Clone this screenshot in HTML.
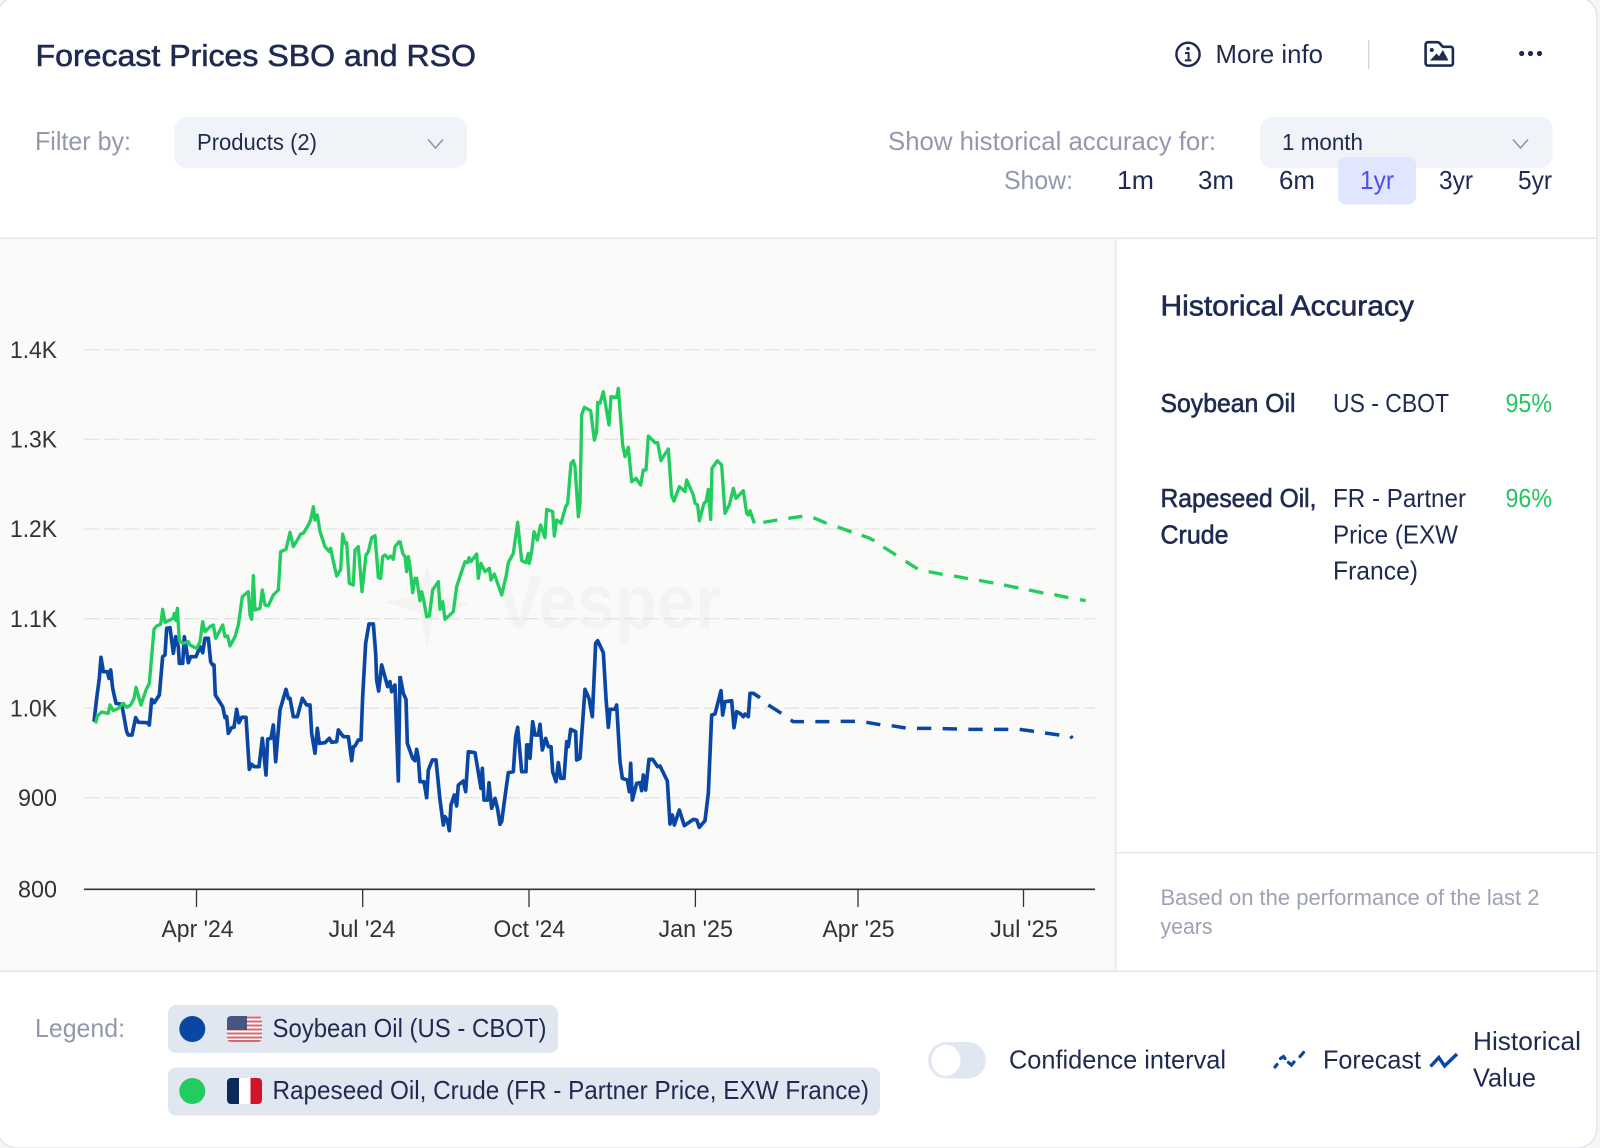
<!DOCTYPE html>
<html lang="en">
<head>
<meta charset="utf-8">
<title>Forecast Prices SBO and RSO</title>
<style>
html,body{margin:0;padding:0;width:1600px;height:1148px;background:#f6f6f6;overflow:hidden}
svg{display:block;position:absolute;left:0;top:0}
text{font-family:"Liberation Sans",sans-serif;font-size:26px;fill:#1f2a50}
.g{fill:#9398ac}
.m{stroke:#1f2a50;stroke-width:.6px}
.a{font-size:24px;fill:#333}
.n{font-size:22.5px;fill:#9da2b5}
.p{fill:#22c55e}
</style>
</head>
<body>
<svg width="1600" height="1148" viewBox="0 0 1600 1148" xmlns="http://www.w3.org/2000/svg">
<defs>
<clipPath id="f1"><rect x="227" y="1016" width="35" height="26" rx="4"/></clipPath>
<clipPath id="f2"><rect x="227" y="1078" width="35" height="26" rx="4"/></clipPath>
<clipPath id="cardclip"><rect x="-3" y="-3" width="1600" height="1151" rx="20"/></clipPath>
</defs>

<rect x="-3" y="-3" width="1600" height="1151" rx="20" fill="#fff"/>
<g clip-path="url(#cardclip)">
<rect x="0" y="239" width="1115" height="732" fill="#fafaf8"/>
<rect x="0" y="237.5" width="1597" height="1.5" fill="#e3e5ee"/>
<rect x="0" y="970.5" width="1597" height="1.5" fill="#e3e5ee"/>
<rect x="1115" y="238" width="1.3" height="733" fill="#e3e5ee"/>
<rect x="1115" y="852" width="482" height="1.3" fill="#e3e5ee"/>
</g>
<rect x="-3" y="-3" width="1600" height="1151" rx="20" fill="none" stroke="#e3e5ee" stroke-width="1.5"/>

<!-- header -->
<text class="m" x="35.500" y="66" style="font-size:31px" textLength="440.500" lengthAdjust="spacingAndGlyphs">Forecast Prices SBO and RSO</text>

<circle cx="1188" cy="54.3" r="11.6" fill="none" stroke="#1f2a50" stroke-width="2.4"/>
<circle cx="1188" cy="48.6" r="1.7" fill="#1f2a50"/>
<path d="M1185 53h3.6v7M1184.8 60.4h6.6" fill="none" stroke="#1f2a50" stroke-width="2"/>
<text x="1215.500" y="63" textLength="107.500" lengthAdjust="spacingAndGlyphs">More info</text>
<rect x="1368" y="40" width="1.5" height="29" fill="#d4d6e2"/>
<path d="M1428 42.2h9.5c1 0 1.6.4 2.3 1.2l2.2 2.6c.5.6 1 .8 1.8.8h6.7c1.4 0 2.4 1 2.4 2.4v14c0 1.5-1 2.4-2.4 2.4h-22.5c-1.4 0-2.4-1-2.4-2.4v-18.6c0-1.4 1-2.4 2.4-2.4z" fill="none" stroke="#1f2a50" stroke-width="2.6"/>
<path d="M1430 60.5l6.5-7 2.6 2.8 3.7-6.300 5.700 10.500z" fill="#1f2a50"/>
<circle cx="1431.800" cy="50" r="2" fill="#1f2a50"/>
<circle cx="1521.700" cy="53.500" r="2.600" fill="#1f2a50"/>
<circle cx="1530.500" cy="53.500" r="2.600" fill="#1f2a50"/>
<circle cx="1539.500" cy="53.500" r="2.600" fill="#1f2a50"/>

<!-- filters -->
<text class="g" x="35" y="150" textLength="96" lengthAdjust="spacingAndGlyphs">Filter by:</text>
<rect x="174.500" y="117" width="292.500" height="51" rx="12" fill="#f0f3f8"/>
<text x="197" y="150" style="font-size:23.500px" textLength="120" lengthAdjust="spacingAndGlyphs">Products (2)</text>
<path d="M428 139.500l7.500 8.500 7.500-8.500" fill="none" stroke="#8b91a6" stroke-width="1.500"/>

<text class="g" x="888" y="150" textLength="328" lengthAdjust="spacingAndGlyphs">Show historical accuracy for:</text>
<rect x="1260" y="117" width="292.500" height="51" rx="12" fill="#f0f3f8"/>
<text x="1282" y="150" style="font-size:23.500px" textLength="81" lengthAdjust="spacingAndGlyphs">1 month</text>
<path d="M1513 139.500l7.500 8.500 7.500-8.500" fill="none" stroke="#8b91a6" stroke-width="1.500"/>

<text class="g" x="1004" y="189" textLength="69" lengthAdjust="spacingAndGlyphs">Show:</text>
<rect x="1338" y="157" width="78" height="47.500" rx="8" fill="#e0e6fd"/>
<text x="1117" y="189" textLength="37" lengthAdjust="spacingAndGlyphs">1m</text>
<text x="1198" y="189" textLength="36" lengthAdjust="spacingAndGlyphs">3m</text>
<text x="1279" y="189" textLength="36" lengthAdjust="spacingAndGlyphs">6m</text>
<text x="1360" y="189" textLength="34" lengthAdjust="spacingAndGlyphs" style="fill:#4a50f0">1yr</text>
<text x="1439" y="189" textLength="34" lengthAdjust="spacingAndGlyphs">3yr</text>
<text x="1518" y="189" textLength="34" lengthAdjust="spacingAndGlyphs">5yr</text>

<!-- watermark -->
<path d="M427 563l7 32 36 9-36 9-7 34-7-34-35-11 35-7z" fill="#f3f3f1"/>
<text x="496" y="628" style="font-size:76px;font-weight:bold;fill:#f3f3f1" textLength="226" lengthAdjust="spacingAndGlyphs">Vesper</text>

<!-- grid -->
<g stroke="#e4e4e3" stroke-width="1.300" stroke-dasharray="15 5">
<path d="M84 349.700H1095M84 439.300H1095M84 529H1095M84 618.700H1095M84 708.200H1095M84 797.700H1095"/>
</g>
<path d="M84 889.300H1095" stroke="#333" stroke-width="1.600"/>
<path d="M196.500 889V907M362.700 889V907M529 889V907M695.400 889V907M858 889V907M1023.500 889V907" stroke="#333" stroke-width="1.300"/>

<g>
<text class="a" x="10" y="358" textLength="47" lengthAdjust="spacingAndGlyphs">1.4K</text>
<text class="a" x="10" y="447.500" textLength="47" lengthAdjust="spacingAndGlyphs">1.3K</text>
<text class="a" x="10" y="537" textLength="47" lengthAdjust="spacingAndGlyphs">1.2K</text>
<text class="a" x="10" y="627" textLength="47" lengthAdjust="spacingAndGlyphs">1.1K</text>
<text class="a" x="10" y="716.500" textLength="47" lengthAdjust="spacingAndGlyphs">1.0K</text>
<text class="a" x="18" y="806" textLength="39" lengthAdjust="spacingAndGlyphs">900</text>
<text class="a" x="18" y="897.500" textLength="39" lengthAdjust="spacingAndGlyphs">800</text>
</g>
<text class="a" x="161.500" y="937" textLength="72" lengthAdjust="spacingAndGlyphs">Apr '24</text>
<text class="a" x="328.500" y="937" textLength="67" lengthAdjust="spacingAndGlyphs">Jul '24</text>
<text class="a" x="493.500" y="937" textLength="71.500" lengthAdjust="spacingAndGlyphs">Oct '24</text>
<text class="a" x="658.500" y="937" textLength="74.500" lengthAdjust="spacingAndGlyphs">Jan '25</text>
<text class="a" x="822.500" y="937" textLength="72" lengthAdjust="spacingAndGlyphs">Apr '25</text>
<text class="a" x="990" y="937" textLength="68" lengthAdjust="spacingAndGlyphs">Jul '25</text>

<!-- series -->
<g fill="none" stroke-linejoin="round" stroke-linecap="butt">
<g transform="translate(60 370) scale(.33333)" stroke-width="10">
<polyline stroke="#0a47a5" stroke-width="11" points="102,1055 110,985 118,925 123,862 130,905 142,905 147,925 152,900 158,955 168,1000 185,1003 192,1040 200,1085 205,1095 216,1095 227,1043 235,1057 262,1058 268,1065 275,988 283,998 298,975 308,860 315,855 320,775 330,773 340,850 347,800 355,830 358,880 368,880 373,800 378,830 385,878 392,860 408,860 420,830 428,848 435,805 445,805 452,875 458,885 462,885 466,975 488,1010 495,1043 500,1040 505,1090 515,1073 522,1072 530,1018 537,1058 545,1042 558,1042 568,1198 575,1183 583,1190 597,1190 607,1105 618,1215 623,1107 633,1105 640,1065 647,1175 660,1020 678,958 685,985 690,985 700,1040 712,1040 727,985 740,1005 750,1005 755,1090 765,1150 772,1075 778,1120 795,1118 808,1105 815,1117 830,1115 835,1080 850,1100 865,1100 875,1172 880,1130 885,1128 895,1110 903,1110 908,980 917,820 927,762 940,762 947,850 950,930 956,963 965,885 983,950 990,935 995,965 1005,945 1015,1233 1020,918"/>
<polyline stroke="#22cc5f" points="107,1060 112,1038 125,1026 145,1030 150,1005 160,1022 175,1015 190,1000 200,1012 212,1005 222,985 228,952 243,1005 258,960 268,940 282,778 290,768 302,763 308,718 315,757 340,745 343,730 348,752 352,715 358,812 368,820 378,818 385,815 390,825 410,835 420,815 428,755 435,785 450,770 460,765 467,805 488,765 495,800 503,798 510,828 525,800 535,765 547,680 565,665 570,735 575,748 580,617 585,720 600,715 607,660 615,705 625,707 640,675 655,660 662,545 678,538 690,487 700,530 715,505 722,492 730,490 745,465 752,450 760,410 765,450 772,435 780,485 795,530 808,545 812,535 818,565 830,618 842,598 848,492 855,520 860,518 868,640 880,645 885,540 895,530 906,665 918,555 925,545 935,503 945,497 955,622 962,625 968,560 975,555 985,565 992,558 1000,568 1005,530 1020,512"/>
</g>
<g transform="translate(400 370) scale(.33333)" stroke-width="10">
<polyline stroke="#0a47a5" stroke-width="11" points="0,918 10,970 18,988 22,1120 38,1165 45,1172 50,1138 55,1165 60,1235 72,1235 80,1283 85,1200 97,1170 108,1170 120,1290 130,1365 135,1340 142,1350 148,1382 153,1305 163,1275 170,1308 175,1245 190,1233 197,1265 205,1145 225,1148 243,1255 247,1195 252,1290 263,1290 267,1238 275,1315 285,1285 293,1318 300,1363 305,1355 315,1280 325,1208 340,1205 347,1100 353,1072 365,1205 378,1205 380,1125 387,1125 390,1165 398,1055 405,1095 415,1095 420,1063 427,1140 437,1105 445,1130 453,1130 458,1205 468,1235 475,1178 482,1225 492,1225 500,1115 505,1130 512,1078 527,1085 530,1170 540,1165 555,958 567,985 577,1040 587,820 593,812 610,848 618,985 625,1072 630,1018 645,1018 650,1005 660,1175 667,1225 682,1230 688,1265 692,1180 697,1290 710,1240 720,1238 725,1262 730,1215 737,1260 747,1168 758,1168 773,1190 780,1188 802,1233 810,1362 817,1335 823,1365 838,1320 853,1367 880,1348 890,1350 898,1372 915,1352 925,1270 935,1035 945,1032 963,962 968,1035 975,995 995,992 1002,1073 1010,1025 1020,1030 1030,1040 1035,1032 1045,1040 1050,970 1060,970 1080,983"/>
<polyline stroke="#22cc5f" points="0,512 8,550 15,560 20,605 25,560 30,590 38,668 45,625 50,625 60,692 65,665 72,695 80,740 88,738 98,660 115,635 120,718 128,695 135,748 160,725 170,650 178,625 195,575 203,578 207,563 213,575 230,552 235,625 243,580 255,605 268,595 273,630 283,612 305,675 318,620 325,578 340,550 353,457 365,572 378,578 385,550 388,580 395,545 402,485 412,510 422,465 435,503 440,418 458,425 463,498 470,450 483,460 497,410 503,400 513,280 520,272 525,290 535,440 540,400 545,135 553,112 572,122 583,210 590,185 593,97 600,100 610,65 627,165 633,80 650,82 655,55 668,225 675,260 685,232 695,335 708,325 722,345 730,300 738,300 745,198 765,218 773,218 783,272 795,252 805,237 815,378 822,393 838,350 855,365 860,330 880,375 885,400 893,405 898,452 912,400 918,395 925,358 932,448 936,295 952,272 965,285 975,430 988,405 1000,355 1008,385 1030,362 1040,430 1045,435 1050,422 1063,460"/>
</g>
<g transform="translate(700 430) scale(.33333)" stroke-width="10">
<path stroke="#22cc5f" d="M190 277L232 270M265 265L307 259M340 263L380 280M413 291L455 306M485 316L510 325L523 333M550 351L588 375M617 394L653 417M686 425L728 433M762 438L804 446M837 451L880 459M912 465L955 474M987 480L1030 489M1063 494L1105 503M1140 509L1157 512"/>
<path stroke="#0a47a5" stroke-width="10.500" d="M205 825L244 850M272 870L280 875L312 875M346 875L388 875M422 874L465 874M499 877L541 884M575 887L617 894M651 895L694 895M728 896L771 897M805 898L848 898M882 898L925 898M959 898L1002 904M1035 909L1078 915M1112 918L1117 925"/>
</g>
</g>

<!-- accuracy panel -->
<text class="m" x="1160.500" y="315.500" style="font-size:29px" textLength="253.500" lengthAdjust="spacingAndGlyphs">Historical Accuracy</text>
<text class="m" x="1160.500" y="412" textLength="135" lengthAdjust="spacingAndGlyphs">Soybean Oil</text>
<text x="1333" y="412" textLength="116" lengthAdjust="spacingAndGlyphs">US - CBOT</text>
<text class="p" x="1505.500" y="412" textLength="46.500" lengthAdjust="spacingAndGlyphs">95%</text>
<text class="m" x="1160.500" y="507" textLength="156" lengthAdjust="spacingAndGlyphs">Rapeseed Oil,</text>
<text class="m" x="1160.500" y="543.500" textLength="68" lengthAdjust="spacingAndGlyphs">Crude</text>
<text x="1333" y="507" textLength="133" lengthAdjust="spacingAndGlyphs">FR - Partner</text>
<text x="1333" y="543.500" textLength="125" lengthAdjust="spacingAndGlyphs">Price (EXW</text>
<text x="1333" y="579.500" textLength="85" lengthAdjust="spacingAndGlyphs">France)</text>
<text class="p" x="1505.500" y="507" textLength="46.500" lengthAdjust="spacingAndGlyphs">96%</text>
<text class="n" x="1160.500" y="905" textLength="379" lengthAdjust="spacingAndGlyphs">Based on the performance of the last 2</text>
<text class="n" x="1160.500" y="934" textLength="52" lengthAdjust="spacingAndGlyphs">years</text>

<!-- legend -->
<text class="g" x="35" y="1037" textLength="90" lengthAdjust="spacingAndGlyphs">Legend:</text>
<rect x="168" y="1005" width="390" height="48" rx="8" fill="#e1e7f0"/>
<circle cx="192.300" cy="1029" r="13" fill="#0a47a5"/>
<g clip-path="url(#f1)">
<rect x="227" y="1016" width="35" height="26" fill="#fff"/>
<path d="M227 1017.500h35M227 1021.500h35M227 1025.500h35M227 1029.500h35M227 1033.500h35M227 1037.500h35M227 1041h35" stroke="#d06a72" stroke-width="2"/>
<rect x="227" y="1016" width="20" height="14" fill="#4a5480"/>
</g>
<text x="272.500" y="1037" textLength="274" lengthAdjust="spacingAndGlyphs">Soybean Oil (US - CBOT)</text>

<rect x="168" y="1067.500" width="712" height="48" rx="8" fill="#e1e7f0"/>
<circle cx="192.300" cy="1091" r="13" fill="#22cc5f"/>
<g clip-path="url(#f2)">
<rect x="227" y="1078" width="12" height="26" fill="#0c2a58"/>
<rect x="239" y="1078" width="12" height="26" fill="#fff"/>
<rect x="250.500" y="1078" width="12" height="26" fill="#d0142c"/>
</g>
<text x="272.500" y="1099" textLength="596.500" lengthAdjust="spacingAndGlyphs">Rapeseed Oil, Crude (FR - Partner Price, EXW France)</text>

<rect x="928" y="1042" width="58" height="36.500" rx="18.250" fill="#e1e7f0"/>
<ellipse cx="946" cy="1060.300" rx="14.500" ry="15.500" fill="#fff"/>
<text x="1009" y="1068.500" textLength="217" lengthAdjust="spacingAndGlyphs">Confidence interval</text>

<path d="M1275 1067L1277 1064.500M1280.500 1058.500L1283.500 1056.500L1285 1058.500M1288.500 1062.500L1291.500 1065L1294 1062M1300 1056.500L1303.500 1052.500" fill="none" stroke="#0a47a5" stroke-width="3.200" stroke-linecap="round"/>
<text x="1323" y="1068.500" textLength="98" lengthAdjust="spacingAndGlyphs">Forecast</text>
<path d="M1430.500 1066.500L1438.800 1057.500L1444.600 1066L1457 1054" fill="none" stroke="#0a47a5" stroke-width="3.400"/>
<text x="1473" y="1050" textLength="108" lengthAdjust="spacingAndGlyphs">Historical</text>
<text x="1473" y="1086.500" textLength="63" lengthAdjust="spacingAndGlyphs">Value</text>
</svg>
</body>
</html>
